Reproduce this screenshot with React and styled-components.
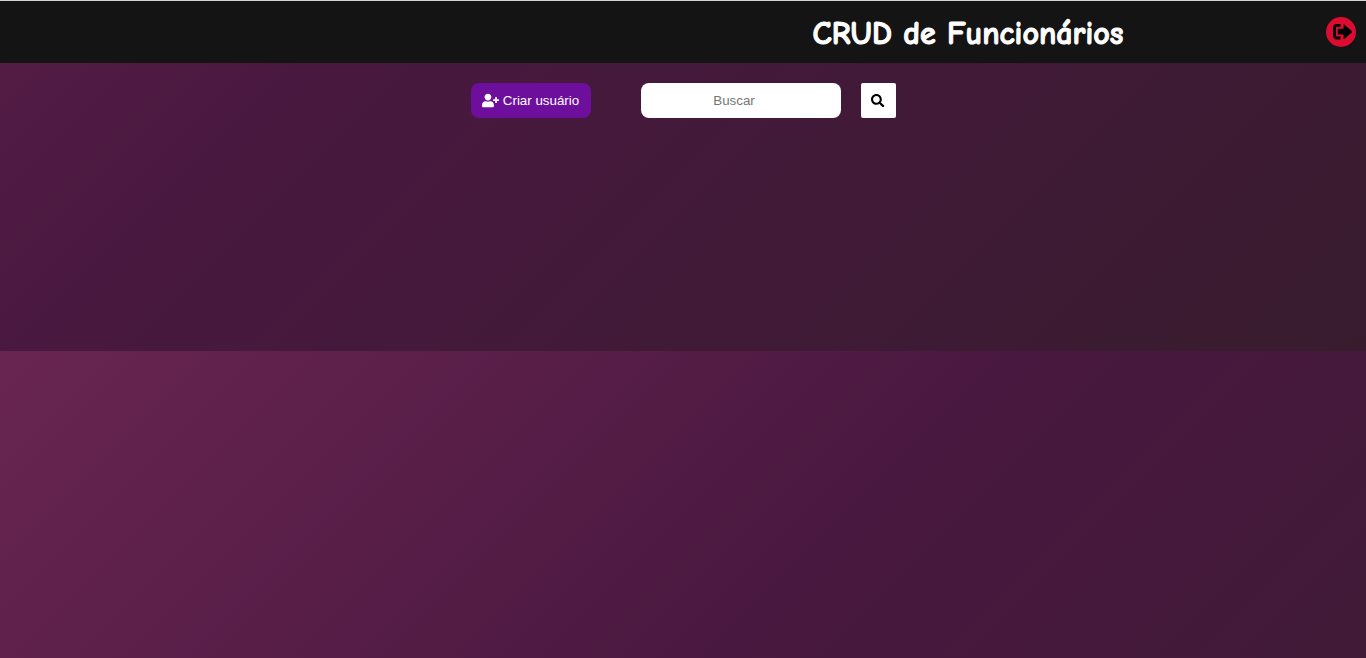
import React from 'react';
import styled, { createGlobalStyle } from 'styled-components';
import { FaUserPlus, FaSearch } from 'react-icons/fa';

const GlobalStyle = createGlobalStyle`
  *, *::before, *::after { box-sizing: border-box; }
  body {
    margin: 0;
    min-height: 100vh;
    font-family: Arial, "Liberation Sans", sans-serif;
    background: linear-gradient(135deg, #692552 0%, #491840 43%, #381c2e 100%) 0 351px / 100% 1000px repeat;
  }
  button, input { font-family: Arial, "Liberation Sans", sans-serif; }
`;

const Header = styled.header`
  display: grid;
  grid-template-columns: 1fr auto;
  align-items: center;
  min-height: 63px;
  padding-right: 10px;
  background: #141414;
  border-top: 1px solid #ced4d0;
`;

const Title = styled.h1`
  margin: 0;
  padding-left: 610px;
  padding-top: 4px;
  color: #fff;
  font-family: "Comic Sans MS", "Comic Neue", "Noto Sans", cursive;
  font-size: 32px;
  line-height: 44px;
  text-align: center;
  white-space: nowrap;
  -webkit-text-stroke: 1px #fff;
`;

const LogoutButton = styled.button`
  display: flex;
  width: 30px;
  height: 30px;
  padding: 0;
  border: 0;
  border-radius: 50%;
  background: #dc0c30;
  color: #000;
  cursor: pointer;
`;

const Toolbar = styled.main`
  display: flex;
  justify-content: center;
  padding: 20px;
`;

const CreateButton = styled.button`
  display: flex;
  align-items: center;
  justify-content: center;
  gap: 4px;
  width: 120px;
  height: 35px;
  margin-right: 50px;
  padding: 0;
  border: 0;
  border-radius: 8px;
  background: #6d0f9c;
  color: #fff;
  white-space: nowrap;
  cursor: pointer;
`;

const SearchForm = styled.form`
  display: flex;
  gap: 20px;
`;

const SearchInput = styled.input`
  width: 200px;
  height: 35px;
  padding: 0 13px 0 0;
  border: 0;
  border-radius: 8px;
  background: #fff;
  color: #000;
  text-align: center;
  &::placeholder { color: #757575; }
`;

const SearchButton = styled.button`
  display: flex;
  align-items: center;
  justify-content: center;
  width: 35px;
  height: 35px;
  padding: 0;
  border: 0;
  border-radius: 2px;
  background: #fff;
  color: #000;
  cursor: pointer;
`;

function LogoutIcon() {
  return (
    <svg width="30" height="30" viewBox="0 0 30 30" fill="none" aria-hidden="true">
      <path
        d="M14.5 8.5H10.6Q8.5 8.5 8.5 10.6V18.8Q8.5 20.9 10.6 20.9H14.5"
        stroke="currentColor"
        strokeWidth="3"
      />
      <path
        d="M12.6 11.8H17.6V7.9Q17.6 6.9 18.5 7.7L25.8 14Q26.5 14.7 25.8 15.4L18.5 21.7Q17.6 22.5 17.6 21.5V17.6H12.6Q11.8 17.6 11.8 16.8V12.6Q11.8 11.8 12.6 11.8Z"
        fill="currentColor"
      />
    </svg>
  );
}

export default function App() {
  return (
    <>
      <GlobalStyle />
      <Header>
        <Title>CRUD de Funcionários</Title>
        <LogoutButton type="button" aria-label="Sair"><LogoutIcon /></LogoutButton>
      </Header>
      <Toolbar>
        <CreateButton type="button"><FaUserPlus size={17} />Criar usuário</CreateButton>
        <SearchForm onSubmit={(event) => event.preventDefault()}>
          <SearchInput type="text" placeholder="Buscar" aria-label="Buscar" />
          <SearchButton type="submit" aria-label="Pesquisar"><FaSearch /></SearchButton>
        </SearchForm>
      </Toolbar>
    </>
  );
}
